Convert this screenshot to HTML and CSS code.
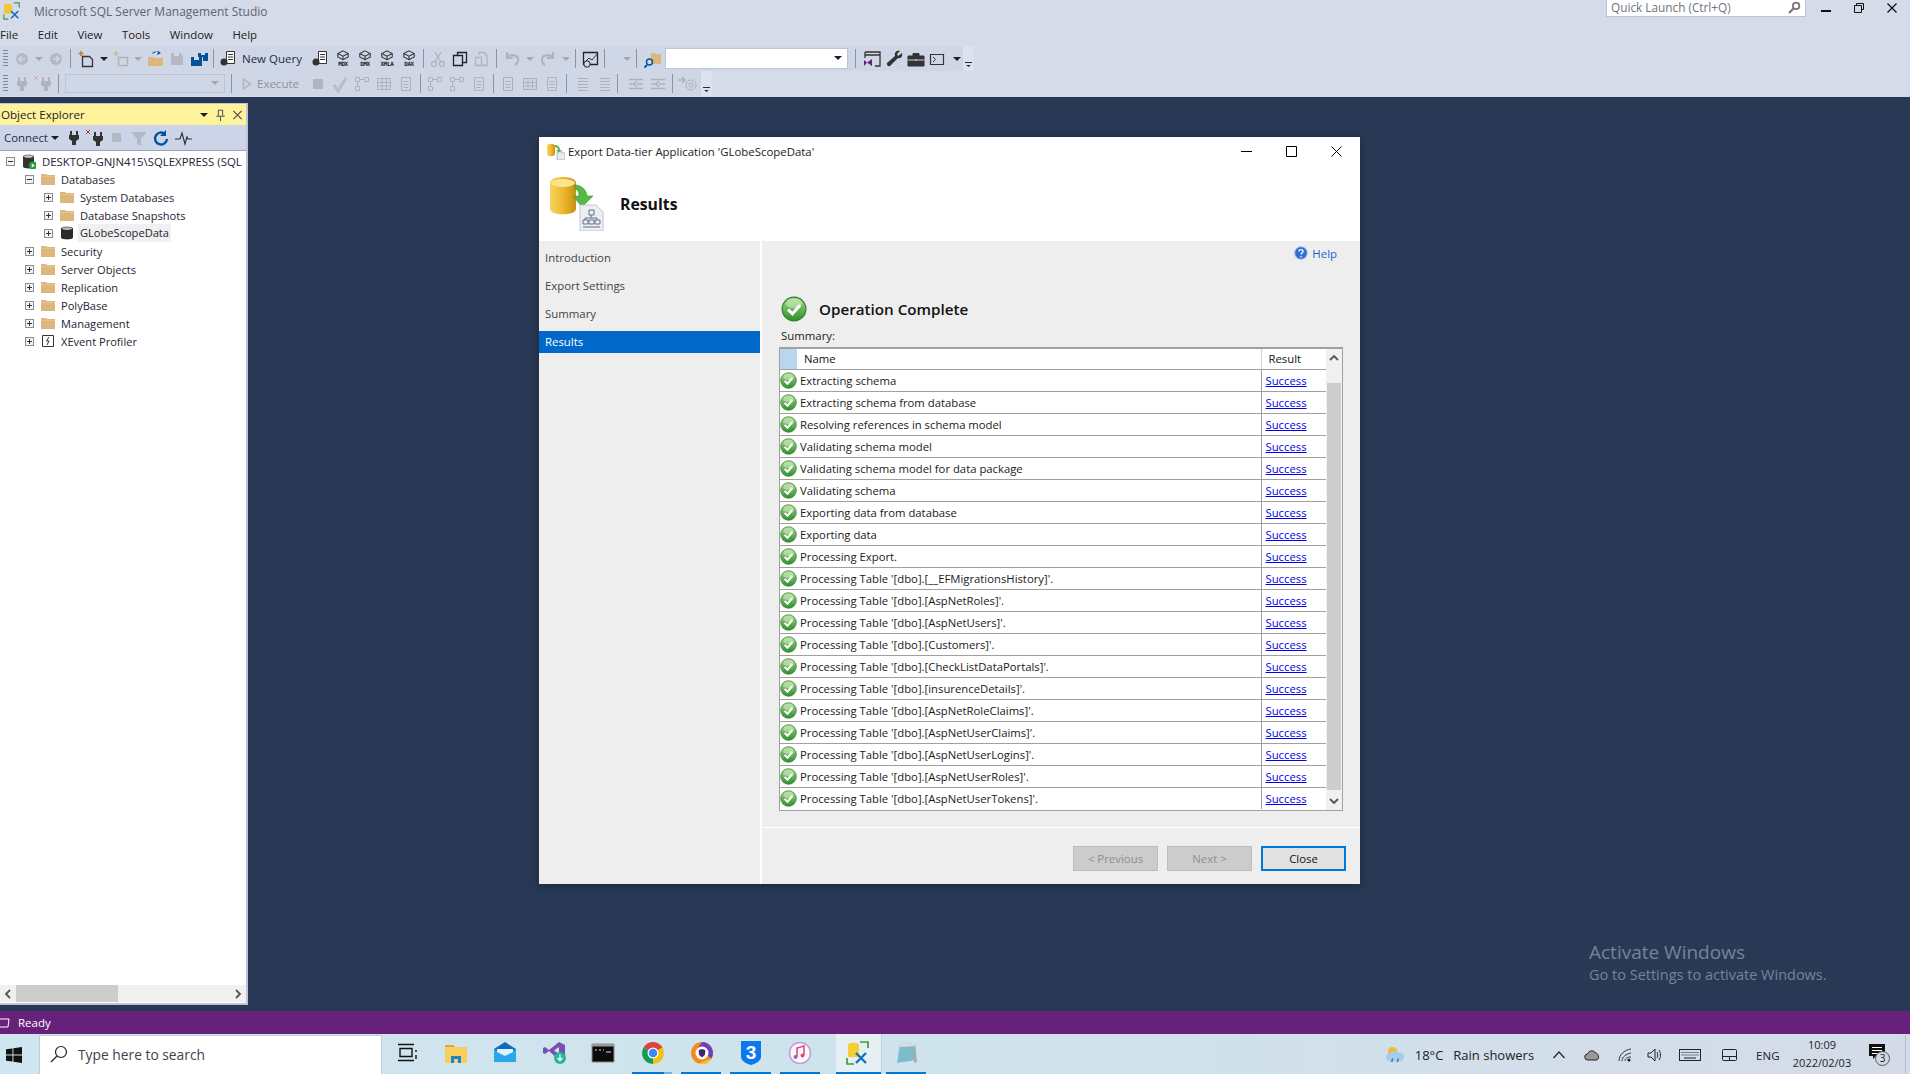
FILE: index.html
```html
<!DOCTYPE html>
<html lang="en">
<head>
    <meta charset="UTF-8"/>
    <title>Microsoft SQL Server Management Studio</title>
    <link rel="stylesheet" href="styles.css">
</head>
<body>

<!-- shared icons -->
<svg class="defs" aria-hidden="true">
    <defs>
        <linearGradient id="okFill" x1="0" y1="0" x2="0" y2="1">
            <stop offset="0" stop-color="#a5d88c"/>
            <stop offset="1" stop-color="#2f8f2c"/>
        </linearGradient>
        <linearGradient id="goldFill" x1="0" y1="0" x2="1" y2="0">
            <stop offset="0" stop-color="#f8d560"/>
            <stop offset="0.55" stop-color="#eab52c"/>
            <stop offset="1" stop-color="#c98f12"/>
        </linearGradient>
    </defs>
    <symbol id="ok" viewBox="0 0 24 24">
        <circle cx="12" cy="12" r="11" fill="url(#okFill)" stroke="#2d7d2a"/>
        <ellipse cx="12" cy="7" rx="7.500" ry="4.500" fill="#d5efc6" opacity=".55"/>
        <path d="M6.5 12.5l4 4 7-8" fill="none" stroke="#fff" stroke-width="2.8"/>
    </symbol>
    <symbol id="folder" viewBox="0 0 16 16">
        <path d="M1 3h5l1 1h8v10H1z" fill="#dcb67a"/>
        <path d="M1 5h14v1H1z" fill="#e6c58f"/>
    </symbol>
    <symbol id="db" viewBox="0 0 16 16">
        <path d="M2 3.5C2 1 14 1 14 3.5v9C14 15 2 15 2 12.5z" fill="#2b2b2b"/>
        <ellipse cx="8" cy="3.6" rx="5" ry="1.3" fill="#bbb"/>
    </symbol>
    <symbol id="plus" viewBox="0 0 9 9">
        <rect x=".5" y=".5" width="8" height="8" fill="#f4f4f4" stroke="#8c8c8c"/>
        <path d="M2 4.5h5M4.5 2v5" stroke="#333"/>
    </symbol>
    <symbol id="minus" viewBox="0 0 9 9">
        <rect x=".5" y=".5" width="8" height="8" fill="#f4f4f4" stroke="#8c8c8c"/>
        <path d="M2 4.5h5" stroke="#333"/>
    </symbol>
    <symbol id="cube" viewBox="0 0 16 16">
        <path d="M8 1l6 3v4l-6 3-6-3V4zM2 4l6 3 6-3M8 7v4" fill="none" stroke="#333" stroke-width="1.2"/>
    </symbol>
    <symbol id="boxes" viewBox="0 0 16 16">
        <path d="M1.500 1.500h4v4h-4zM10.500 1.500h4v4h-4zM5.500 3.500h5M3.500 5.500v5M1.500 10.500h4v4h-4z" fill="none" stroke="currentColor"/>
    </symbol>
    <symbol id="sheet" viewBox="0 0 16 16">
        <path d="M3.500 1.500h9v13h-9zM5.500 5.500h5M5.500 8.500h5M5.500 11.500h5" fill="none" stroke="currentColor"/>
    </symbol>
    <symbol id="table" viewBox="0 0 16 16">
        <path d="M1.500 2.500h13v11h-13zM1.500 6.500h13M1.500 10h13M6 2.500v11M10.500 2.500v11" fill="none" stroke="currentColor"/>
    </symbol>
    <symbol id="plug" viewBox="0 0 16 16">
        <path d="M4 1h2v4h4V1h2v4h1v4l-3 2v4H6v-4L3 9V5h1z" fill="currentColor"/>
    </symbol>
    <symbol id="indent" viewBox="0 0 16 16">
        <path d="M5 2.500h10M5 5.500h10M5 8.500h10M5 11.500h10M5 14.500h10" stroke="currentColor"/>
    </symbol>
    <symbol id="shift" viewBox="0 0 16 16">
        <path d="M1 3.500h14M1 12.500h14M1 8h5M9 8h6M9 5l-3 3 3 3" fill="none" stroke="currentColor" stroke-width="1.300"/>
    </symbol>
    <symbol id="chromeLogo" viewBox="0 0 24 24">
        <path d="M12 12L2.500 6.500A11 11 0 0 1 21.500 6.500z" fill="#db4437"/>
        <path d="M12 12L21.500 6.500A11 11 0 0 1 12 23z" fill="#f4c20d"/>
        <path d="M12 12L12 23A11 11 0 0 1 2.500 6.500z" fill="#0f9d58"/>
        <circle cx="12" cy="12" r="5.500" fill="#fff"/>
        <circle cx="12" cy="12" r="4.300" fill="#4285f4"/>
    </symbol>
</svg>

<header class="titlebar">
    <svg class="app-logo" viewBox="0 0 20 20">
        <path d="M1 4c0-3 9-3 9 0v9H1z" fill="#f2c73a"/>
        <path d="M12 1h6v5M1 14v5h5M18 13v0" fill="none" stroke="#3f9c3a" stroke-width="1.300"/>
        <path d="M9 10l8 8M17 10l-8 8" stroke="#0e70c0" stroke-width="1.800"/>
    </svg>
    <span class="app-title">Microsoft SQL Server Management Studio</span>
    <div class="quick-launch">
        <span>Quick Launch (Ctrl+Q)</span>
        <svg class="ql-icon" viewBox="0 0 12 12"><circle cx="7.500" cy="4.500" r="3" fill="none" stroke="#777" stroke-width="1.600"/><path d="M5 7l-4 4" stroke="#777" stroke-width="2"/></svg>
    </div>
    <div class="win-btns">
        <svg viewBox="0 0 10 10"><path d="M0 8h10" stroke="#111" stroke-width="2"/></svg>
        <svg viewBox="0 0 10 10"><path d="M2.500 2.500V.5h7v6h-2M.5 2.500h7v7h-7z" fill="none" stroke="#111"/></svg>
        <svg viewBox="0 0 10 10"><path d="M.5.500l9 9M9.500.5l-9 9" stroke="#111" stroke-width="1.300"/></svg>
    </div>
</header>

<nav class="menubar">
    <span>File</span><span>Edit</span><span>View</span><span>Tools</span><span>Window</span><span>Help</span>
</nav>

<div class="toolrow">
    <div class="toolbar first">
        <i class="grip"></i>
        <svg class="ti off"><circle cx="11" cy="11" r="6" fill="#b4b8c2"/><path d="M14 11H8m3-3l-3 3 3 3" fill="none" stroke="#d0d6e4" stroke-width="1.500"/></svg>
        <b class="dd off"></b>
        <svg class="ti off"><circle cx="11" cy="11" r="6" fill="#b4b8c2"/><path d="M8 11h6m-3-3l3 3-3 3" fill="none" stroke="#d0d6e4" stroke-width="1.500"/></svg>
        <i class="sep"></i>
        <svg class="ti sp2"><path d="M6.500 8.500h7l3 3v7h-10z" fill="none" stroke="#333" stroke-width="1.300"/><path d="M5 3v5M2.500 5.500h5" stroke="#c27d1a" stroke-width="1.500"/></svg>
        <b class="dd"></b>
        <svg class="ti off"><path d="M8.500 9.500h9v8h-9z" fill="none" stroke="#b0b4bc" stroke-width="1.500"/><path d="M6 3v5M3.500 5.500h5" stroke="#d3b98e" stroke-width="1.500"/></svg>
        <b class="dd off"></b>
        <svg class="ti"><path d="M4 9h5l1 1h9v8H4z" fill="#dcb67a"/><path d="M8 6c1-3 4-3 6-2l-1 3 4-2-3-2" fill="#00539c"/></svg>
        <svg class="ti off"><path d="M5 5h9l3 3v9H5z" fill="#b4b8c2"/><path d="M8 5h5v3H8z" fill="#d0d6e4"/></svg>
        <svg class="ti"><path d="M3 9h11v9H3z" fill="#00539c"/><path d="M10 5h10v8h-5V9h-5z" fill="#00539c"/><path d="M6 9h5v3H6zM13 5h4v2h-4z" fill="#d0d6e4"/></svg>
        <i class="sep"></i>
        <div class="tb-btn">
            <svg class="ti narrow"><path d="M8.500 3.500h8v12h-8z" fill="#fff" stroke="#333"/><path d="M10 6.500h5M10 9h5M10 11.500h5" stroke="#333"/><ellipse cx="6" cy="14" rx="3.500" ry="3.500" fill="#333"/></svg>
            <span>New Query</span>
        </div>
        <svg class="ti sp8"><path d="M8.500 3.500h8v12h-8z" fill="#fff" stroke="#333"/><path d="M10 6.500h5M10 9h5M10 11.500h5" stroke="#333"/><ellipse cx="6" cy="14" rx="3.500" ry="3.500" fill="#333"/></svg>
        <div class="cube-ic"><svg><use href="#cube"/></svg><em>MDX</em></div>
        <div class="cube-ic"><svg><use href="#cube"/></svg><em>DMX</em></div>
        <div class="cube-ic"><svg><use href="#cube"/></svg><em>XMLA</em></div>
        <div class="cube-ic"><svg><use href="#cube"/></svg><em>DAX</em></div>
        <i class="sep"></i>
        <svg class="ti off"><circle cx="7" cy="16" r="2.500" fill="none" stroke="#b0b4bc" stroke-width="1.300"/><circle cx="15" cy="16" r="2.500" fill="none" stroke="#b0b4bc" stroke-width="1.300"/><path d="M8 14l6-10M14 14L8 4" stroke="#b0b4bc" stroke-width="1.300"/></svg>
        <svg class="ti"><path d="M4.500 7.500h9v10h-9zM8.500 7.500v-3h9v10h-4" fill="none" stroke="#222" stroke-width="1.300"/></svg>
        <svg class="ti off"><path d="M4.500 9.500h6v8h-6zM8 7V4.500h5l3 3v10h-5" fill="none" stroke="#b0b4bc" stroke-width="1.300"/></svg>
        <i class="sep"></i>
        <svg class="ti off sp2"><path d="M5 4v6h6M5 10c4-5 12-3 11 3-.4 2-1.500 3-3 4" fill="none" stroke="#b0b4bc" stroke-width="2.200"/></svg>
        <b class="dd off"></b>
        <svg class="ti off"><path d="M17 4v6h-6M17 10c-4-5-12-3-11 3 .4 2 1.500 3 3 4" fill="none" stroke="#b0b4bc" stroke-width="2.200"/></svg>
        <b class="dd off sp2"></b>
        <i class="sep"></i>
        <svg class="ti"><path d="M4.500 4.500h14v12h-14z" fill="none" stroke="#222" stroke-width="1.300"/><path d="M6 14l4-4 3 2 5-6" fill="none" stroke="#333"/><circle cx="8" cy="16" r="3.200" fill="#d0d6e4" stroke="#222"/></svg>
        <i class="sep"></i>
        <span class="blank"></span>
        <b class="dd off"></b>
        <i class="sep"></i>
        <svg class="ti sp2"><path d="M9 5h4l1 1h5v10H9z" fill="#dcb67a"/><circle cx="7.500" cy="14" r="3" fill="none" stroke="#00539c" stroke-width="1.400"/><path d="M5 17l-2.500 2.500" stroke="#00539c" stroke-width="1.800"/></svg>
        <div class="db-combo"><b class="dd dark"></b></div>
        <i class="sep"></i>
        <svg class="ti sp2"><path d="M4 4h15v14h-5M4 4v6M4 7h15" fill="none" stroke="#333" stroke-width="1.300"/><path d="M3 12l3 2.500L3 18zM6 14.500L11 11v7z" fill="#68217a"/></svg>
        <svg class="ti"><path d="M19 5l-4 3-1-2 3-3c-3-1-6 1-5 5L4 15a2.300 2.300 0 0 0 3 3l8-8c3 1 5-2 4-5z" fill="#333"/></svg>
        <svg class="ti"><path d="M3 8h16v10H3zM8 8V5.500h6V8" fill="#333" stroke="#333"/><path d="M3 12h16M11 11v2" stroke="#d0d6e4"/></svg>
        <svg class="ti wide"><path d="M3.500 6.500h13v10h-13z" fill="none" stroke="#333" stroke-width="1.200"/><path d="M6 9l2.500 2.500L6 14" fill="none" stroke="#333"/></svg>
        <b class="dd dark"></b>
    </div>
    <div class="overflow"><b></b></div>
</div>

<div class="toolrow">
    <div class="toolbar second">
        <i class="grip"></i>
        <svg class="ti off"><use href="#plug" x="3" y="3" width="16" height="16" color="#b0b4bc"/></svg>
        <svg class="ti off"><use href="#plug" x="5" y="3" width="16" height="16" color="#b0b4bc"/><path d="M1 3l4 4M5 3L1 7" stroke="#d3a9a0"/></svg>
        <i class="sep"></i>
        <div class="conn-combo"><b class="dd off"></b></div>
        <i class="sep"></i>
        <svg class="play" viewBox="0 0 10 14"><path d="M1.500 2l7 5-7 5z" fill="none" stroke="#b0b4bc" stroke-width="1.500"/></svg>
        <span class="exec">Execute</span>
        <svg class="ti off sp8"><rect x="6" y="6" width="10" height="10" fill="#b0b4bc"/></svg>
        <svg class="ti off"><path d="M5 12l4 6 8-13" fill="none" stroke="#b8bcc6" stroke-width="3"/></svg>
        <svg class="ti off tone"><use href="#boxes" x="3" y="3" width="16" height="16"/></svg>
        <svg class="ti off tone"><use href="#table" x="3" y="3" width="16" height="16"/></svg>
        <svg class="ti off tone"><use href="#sheet" x="3" y="3" width="16" height="16"/></svg>
        <i class="sep"></i>
        <svg class="ti off tone"><use href="#boxes" x="3" y="3" width="16" height="16"/></svg>
        <svg class="ti off tone"><use href="#boxes" x="3" y="3" width="16" height="16"/></svg>
        <svg class="ti off tone"><use href="#sheet" x="3" y="3" width="16" height="16"/></svg>
        <i class="sep"></i>
        <svg class="ti off tone"><use href="#sheet" x="3" y="3" width="16" height="16"/></svg>
        <svg class="ti off tone"><use href="#table" x="3" y="3" width="16" height="16"/></svg>
        <svg class="ti off tone"><use href="#sheet" x="3" y="3" width="16" height="16"/></svg>
        <i class="sep"></i>
        <svg class="ti off tone"><use href="#indent" x="3" y="3" width="16" height="16"/></svg>
        <svg class="ti off tone"><use href="#indent" x="3" y="3" width="16" height="16"/></svg>
        <i class="sep"></i>
        <svg class="ti off tone sp4"><use href="#shift" x="3" y="3" width="16" height="16"/></svg>
        <svg class="ti off tone"><use href="#shift" x="3" y="3" width="16" height="16"/></svg>
        <i class="sep"></i>
        <svg class="ti off tone wide"><path d="M2 7h6m-2-3l3 3-3 3" fill="none" stroke="currentColor" stroke-width="1.500"/><circle cx="15" cy="12" r="5" fill="none" stroke="currentColor"/><circle cx="15" cy="12" r="2" fill="none" stroke="currentColor"/></svg>
    </div>
    <div class="overflow"><b></b></div>
</div>

<main class="workspace">
    <aside class="explorer">
        <div class="oe-title">
            <span>Object Explorer</span>
            <b class="dd dark"></b>
            <svg viewBox="0 0 12 14"><path d="M3.500 1.500h5v7h-5zM1 8.500h10M6 9v5" fill="none" stroke="#555" stroke-width="1.200"/></svg>
            <svg viewBox="0 0 12 12"><path d="M1.500 1.500l9 9M10.500 1.500l-9 9" stroke="#555" stroke-width="1.400"/></svg>
        </div>
        <div class="oe-tools">
            <span class="connect">Connect</span>
            <b class="dd dark"></b>
            <svg class="oi first-oi"><use href="#plug" x="2" y="1" width="16" height="16" color="#333"/></svg>
            <svg class="oi"><use href="#plug" x="4" y="2" width="16" height="16" color="#333"/><path d="M0 1l4 4M4 1L0 5" stroke="#c1392b"/></svg>
            <svg class="oi"><rect x="4" y="4" width="9" height="9" fill="#b4b8c2"/></svg>
            <svg class="oi"><path d="M1 3h16l-6 7v7l-4-2v-5z" fill="#b4b8c2"/></svg>
            <svg class="oi"><path d="M15 10a6 6 0 1 1-2-5" fill="none" stroke="#00539c" stroke-width="2.400"/><path d="M14 1v6H8z" fill="#00539c"/></svg>
            <svg class="oi"><path d="M1 10h5l2-6 3 11 2-7 1 2h4" fill="none" stroke="#333" stroke-width="1.200"/></svg>
        </div>
        <div class="tree">
            <div class="node lv0"><svg class="exp"><use href="#minus"/></svg>
                <svg class="ni"><path d="M3 3.500C3 1 14 1 14 3.500v10C14 16 3 16 3 13.500z" fill="#333"/><ellipse cx="8.500" cy="3.500" rx="4.500" ry="1.300" fill="#ccc"/><circle cx="13" cy="12.500" r="4" fill="#22a33a"/><path d="M11.800 10.500l3 2-3 2z" fill="#fff"/></svg>
                <span>DESKTOP-GNJN415\SQLEXPRESS (SQL</span></div>
            <div class="node lv1"><svg class="exp"><use href="#minus"/></svg><svg class="ni"><use href="#folder"/></svg><span>Databases</span></div>
            <div class="node lv2"><svg class="exp"><use href="#plus"/></svg><svg class="ni"><use href="#folder"/></svg><span>System Databases</span></div>
            <div class="node lv2"><svg class="exp"><use href="#plus"/></svg><svg class="ni"><use href="#folder"/></svg><span>Database Snapshots</span></div>
            <div class="node lv2"><svg class="exp"><use href="#plus"/></svg><svg class="ni"><use href="#db"/></svg><span class="picked">GLobeScopeData</span></div>
            <div class="node lv1"><svg class="exp"><use href="#plus"/></svg><svg class="ni"><use href="#folder"/></svg><span>Security</span></div>
            <div class="node lv1"><svg class="exp"><use href="#plus"/></svg><svg class="ni"><use href="#folder"/></svg><span>Server Objects</span></div>
            <div class="node lv1"><svg class="exp"><use href="#plus"/></svg><svg class="ni"><use href="#folder"/></svg><span>Replication</span></div>
            <div class="node lv1"><svg class="exp"><use href="#plus"/></svg><svg class="ni"><use href="#folder"/></svg><span>PolyBase</span></div>
            <div class="node lv1"><svg class="exp"><use href="#plus"/></svg><svg class="ni"><use href="#folder"/></svg><span>Management</span></div>
            <div class="node lv1"><svg class="exp"><use href="#plus"/></svg><svg class="ni"><path d="M2.500 2.500h11v11h-11z" fill="#fff" stroke="#333"/><path d="M9 4L6.500 8H9l-2 4" fill="none" stroke="#333"/></svg><span>XEvent Profiler</span></div>
        </div>
        <div class="hscroll">
            <svg viewBox="0 0 8 10"><path d="M6 1L2 5l4 4" fill="none" stroke="#555" stroke-width="1.800"/></svg>
            <div class="hthumb"></div>
            <svg viewBox="0 0 8 10"><path d="M2 1l4 4-4 4" fill="none" stroke="#555" stroke-width="1.800"/></svg>
        </div>
    </aside>

    <section class="dialog">
        <div class="dlg-title">
            <svg class="dlg-icon" viewBox="0 0 18 17">
                <path d="M0 3c0-3 8-3 8 0v8c0 3-8 3-8 0z" fill="url(#goldFill)"/>
                <path d="M8 2c3 0 5 2 5 5h2l-3 3-3-3h2c0-1-1-3-3-3z" fill="#5cb54a"/>
                <path d="M10 9h6l2 2v6h-8z" fill="#e6e9ee" stroke="#8a93a5" stroke-width=".6"/>
            </svg>
            <span>Export Data-tier Application 'GLobeScopeData'</span>
            <div class="dlg-btns">
                <svg viewBox="0 0 11 11"><path d="M0 5.500h11" stroke="#000"/></svg>
                <svg viewBox="0 0 11 11"><path d="M.5.500h10v10H.5z" fill="none" stroke="#000"/></svg>
                <svg viewBox="0 0 11 11"><path d="M.5.500l10 10M10.500.5l-10 10" stroke="#000"/></svg>
            </div>
        </div>
        <div class="dlg-head">
            <svg class="dlg-big" viewBox="0 0 54 54">
                <path d="M0 6C0-2 26-2 26 6v26c0 7-26 7-26 0z" fill="url(#goldFill)"/>
                <ellipse cx="13" cy="6" rx="12" ry="4" fill="#fbe48a"/>
                <path d="M25 8c8 0 12 7 12 11h6L32 30 23 19h6c0-4-1-6-4-7z" fill="#57b846" stroke="#3c9a33" stroke-width=".6"/>
                <path d="M30 28h16l7 7v19H30z" fill="#eceef2" stroke="#c0c5cf"/>
                <path d="M39 33h5v5h-5zM33 43h5v4h-5zM39 43h5v4h-5zM45 43h5v4h-5zM41 38v3M35 43v-2h12v2M33 50h17" fill="none" stroke="#5c7391"/>
            </svg>
            <h2>Results</h2>
        </div>
        <div class="dlg-body">
            <ul class="dlg-nav">
                <li>Introduction</li>
                <li>Export Settings</li>
                <li>Summary</li>
                <li class="active">Results</li>
            </ul>
            <div class="dlg-main">
                <div class="help">
                    <svg viewBox="0 0 14 14"><circle cx="7" cy="7" r="6.200" fill="#2f6fd0" stroke="#8fb3e6"/><path d="M5 5.500C5 3 9 3 9 5.500 9 7 7 7 7 8.500M7 10v1.300" fill="none" stroke="#fff" stroke-width="1.400"/></svg>
                    <a>Help</a>
                </div>
                <div class="op-row">
                    <svg><use href="#ok"/></svg>
                    <h3>Operation Complete</h3>
                </div>
                <div class="summary">Summary:</div>
                <div class="grid-wrap">
                    <table class="grid">
                        <colgroup><col class="c-icon"><col class="c-name"><col class="c-res"></colgroup>
                        <thead>
                            <tr><th class="corner"></th><th class="h-name">Name</th><th class="h-res">Result</th></tr>
                        </thead>
                        <tbody>
                            <tr><td><svg><use href="#ok"/></svg></td><td>Extracting schema</td><td><a>Success</a></td></tr>
                            <tr><td><svg><use href="#ok"/></svg></td><td>Extracting schema from database</td><td><a>Success</a></td></tr>
                            <tr><td><svg><use href="#ok"/></svg></td><td>Resolving references in schema model</td><td><a>Success</a></td></tr>
                            <tr><td><svg><use href="#ok"/></svg></td><td>Validating schema model</td><td><a>Success</a></td></tr>
                            <tr><td><svg><use href="#ok"/></svg></td><td>Validating schema model for data package</td><td><a>Success</a></td></tr>
                            <tr><td><svg><use href="#ok"/></svg></td><td>Validating schema</td><td><a>Success</a></td></tr>
                            <tr><td><svg><use href="#ok"/></svg></td><td>Exporting data from database</td><td><a>Success</a></td></tr>
                            <tr><td><svg><use href="#ok"/></svg></td><td>Exporting data</td><td><a>Success</a></td></tr>
                            <tr><td><svg><use href="#ok"/></svg></td><td>Processing Export.</td><td><a>Success</a></td></tr>
                            <tr><td><svg><use href="#ok"/></svg></td><td>Processing Table '[dbo].[__EFMigrationsHistory]'.</td><td><a>Success</a></td></tr>
                            <tr><td><svg><use href="#ok"/></svg></td><td>Processing Table '[dbo].[AspNetRoles]'.</td><td><a>Success</a></td></tr>
                            <tr><td><svg><use href="#ok"/></svg></td><td>Processing Table '[dbo].[AspNetUsers]'.</td><td><a>Success</a></td></tr>
                            <tr><td><svg><use href="#ok"/></svg></td><td>Processing Table '[dbo].[Customers]'.</td><td><a>Success</a></td></tr>
                            <tr><td><svg><use href="#ok"/></svg></td><td>Processing Table '[dbo].[CheckListDataPortals]'.</td><td><a>Success</a></td></tr>
                            <tr><td><svg><use href="#ok"/></svg></td><td>Processing Table '[dbo].[insurenceDetails]'.</td><td><a>Success</a></td></tr>
                            <tr><td><svg><use href="#ok"/></svg></td><td>Processing Table '[dbo].[AspNetRoleClaims]'.</td><td><a>Success</a></td></tr>
                            <tr><td><svg><use href="#ok"/></svg></td><td>Processing Table '[dbo].[AspNetUserClaims]'.</td><td><a>Success</a></td></tr>
                            <tr><td><svg><use href="#ok"/></svg></td><td>Processing Table '[dbo].[AspNetUserLogins]'.</td><td><a>Success</a></td></tr>
                            <tr><td><svg><use href="#ok"/></svg></td><td>Processing Table '[dbo].[AspNetUserRoles]'.</td><td><a>Success</a></td></tr>
                            <tr><td><svg><use href="#ok"/></svg></td><td>Processing Table '[dbo].[AspNetUserTokens]'.</td><td><a>Success</a></td></tr>
                        </tbody>
                    </table>
                    <div class="vscroll">
                        <svg viewBox="0 0 10 8"><path d="M1 6l4-4 4 4" fill="none" stroke="#555" stroke-width="1.800"/></svg>
                        <div class="vthumb"></div>
                        <svg viewBox="0 0 10 8"><path d="M1 2l4 4 4-4" fill="none" stroke="#555" stroke-width="1.800"/></svg>
                    </div>
                </div>
                <div class="dlg-foot">
                    <button class="btn" disabled>&lt; Previous</button>
                    <button class="btn" disabled>Next &gt;</button>
                    <button class="btn main-btn">Close</button>
                </div>
            </div>
        </div>
    </section>

    <div class="activate">
        <div class="act-big">Activate Windows</div>
        <div class="act-small">Go to Settings to activate Windows.</div>
    </div>
</main>

<div class="statusbar">
    <svg viewBox="0 0 10 10"><path d="M-2 1h11L8 9H-2" fill="none" stroke="#fff"/></svg>
    <span>Ready</span>
</div>

<footer class="taskbar">
    <svg class="start" viewBox="0 0 16 16"><path d="M0 2.300l6.500-.9v6.200H0zM7.400 1.300L16 0v7.600H7.400zM0 8.400h6.500v6.200L0 13.700zM7.400 8.400H16V16l-8.600-1.300z" fill="#111"/></svg>
    <div class="search">
        <svg viewBox="0 0 18 18"><circle cx="11" cy="7" r="5.500" fill="none" stroke="#222" stroke-width="1.200"/><path d="M7 11l-6 6" stroke="#222" stroke-width="1.200"/></svg>
        <span>Type here to search</span>
    </div>
    <div class="apps">
        <div class="app"><svg viewBox="0 0 24 24"><path d="M3 3.500h16M3 19.500h16M5 7.500h12v8H5zM21 9v2M21 14v4" fill="none" stroke="#111" stroke-width="1.400"/></svg></div>
        <div class="app"><svg viewBox="0 0 24 24"><path d="M1 4h8l2 2h12v16H1z" fill="#f6cf5f"/><path d="M1 4h8l2 2H1z" fill="#e2a92f"/><path d="M7 15h10v7h-3v-4h-4v4H7z" fill="#1a86d0"/></svg></div>
        <div class="app"><svg viewBox="0 0 24 24"><path d="M1 8l11-7 11 7v13H1z" fill="#0f6cbd"/><path d="M1 8l11 7 11-7v13H1z" fill="#28a8ea"/><path d="M4 8h16v3l-8 4-8-4z" fill="#dff1fb"/></svg></div>
        <div class="app"><svg viewBox="0 0 24 24"><path d="M17 1l6 3v12l-6 3L7 10l-4 3-2-1V7l2-1 4 3zM17 6l-5 3.500 5 3.500z" fill="#7a4fb5"/><circle cx="18" cy="17" r="6" fill="#1fb89a"/><path d="M18 13.500v6m-2.500-2.500l2.500 2.500 2.500-2.500" fill="none" stroke="#fff" stroke-width="1.300"/></svg></div>
        <div class="app"><svg viewBox="0 0 24 24"><path d="M1 3h22v18H1z" fill="#0b0b0b" stroke="#8c8c8c"/><path d="M1 3h22v2.500H1z" fill="#9a9a9a"/><path d="M4 9h2M8 9h2M12 9h1M15 11h5" stroke="#ddd"/></svg></div>
        <div class="app on stacked"><svg><use href="#chromeLogo"/></svg></div>
        <div class="app on"><svg viewBox="0 0 24 24"><circle cx="12" cy="12" r="11" fill="#f28a1e"/><path d="M12 1a11 11 0 0 1 9.500 16.500L8 7z" fill="#6a3fc4"/><path d="M21.500 17.500A11 11 0 0 1 8 22.500z" fill="#f6c42f"/><circle cx="12" cy="12" r="6.500" fill="#fff"/><path d="M8.800 9l3.200-1 3.200 1v3c0 2-1.500 3.500-3.200 4.200C10.300 15.500 8.800 14 8.800 12z" fill="#3a2a66"/></svg></div>
        <div class="app on"><svg viewBox="0 0 24 24"><path d="M2 0h20v16c0 4-6 7-10 8-4-1-10-4-10-8z" fill="#0b78ec"/><text x="12" y="18" class="three">3</text></svg></div>
        <div class="app on"><svg viewBox="0 0 24 24"><circle cx="12" cy="12" r="10.500" fill="#fafafa" stroke="#c39bd6" stroke-width="1.500"/><path d="M9 16V7l7-2v9" fill="none" stroke="#e04a7d" stroke-width="1.600"/><circle cx="7.500" cy="16" r="2" fill="#a85ad0"/><circle cx="14.500" cy="14.500" r="2" fill="#e04a7d"/></svg></div>
        <div class="app on current"><svg viewBox="0 0 24 24"><path d="M2 4c0-3 11-3 11 0v12H2z" fill="#f5cf2f"/><path d="M14 1h8v6M1 17v6h7" fill="none" stroke="#3f9c3a" stroke-width="1.700"/><path d="M10 12l10 10M20 12L10 22" stroke="#0e70c0" stroke-width="2.300"/></svg></div>
        <div class="app on"><svg viewBox="0 0 24 24"><path d="M6 3l15-1 1 17-19 3z" fill="#7fbccb"/><path d="M6 3l15-1v3L6 6z" fill="#ddd"/><path d="M21 2l2 19-3 1z" fill="#b6a894"/></svg></div>
    </div>
    <div class="tray">
        <svg class="weather" viewBox="0 0 22 20"><circle cx="8" cy="6" r="5" fill="#f5b83d"/><path d="M5 16a4 4 0 0 1 0-8c1-3 7-4 9-1 4-1 7 2 6 5 0 2-2 4-4 4z" fill="#a5cdeb"/><path d="M8 13l-1 4M14 13l-1 4" stroke="#2f80d0" stroke-width="1.600"/></svg>
        <span class="temp">18°C</span>
        <span class="cond">Rain showers</span>
        <svg class="t-chev" viewBox="0 0 12 8"><path d="M.5 7l5.500-6 5.500 6" fill="none" stroke="#222" stroke-width="1.200"/></svg>
        <svg class="t-cloud" viewBox="0 0 16 12"><path d="M4 11a3 3 0 0 1-.5-6C5 1 10 1 11.500 4 15 4 16 11 12 11z" fill="#999" stroke="#222"/></svg>
        <svg class="t-wifi" viewBox="0 0 14 14"><path d="M1 13C1 7 6 2 13 1M4 13c0-4 4-7 9-8M7 13c0-2 2-4 6-4" fill="none" stroke="#333"/><circle cx="11" cy="12" r="1.600" fill="#222"/></svg>
        <svg class="t-vol" viewBox="0 0 16 14"><path d="M1 5h3l4-4v12L4 9H1z" fill="none" stroke="#222"/><path d="M10 4c1 2 1 4 0 6M12 2c2 3 2 7 0 10" fill="none" stroke="#222"/></svg>
        <svg class="t-kbd" viewBox="0 0 22 12"><rect x=".5" y=".5" width="21" height="11" fill="none" stroke="#222"/><path d="M2.500 3.500h17M2.500 6h17" stroke="#222" stroke-dasharray="1 1"/><path d="M5 9h12" stroke="#222"/></svg>
        <svg class="t-pad" viewBox="0 0 15 12"><rect x=".5" y=".5" width="14" height="11" rx="1" fill="none" stroke="#222"/><path d="M.5 7.500h14M7.500 7.500v4" stroke="#222"/></svg>
        <span class="lang">ENG</span>
        <div class="clock"><span>10:09</span><span>2022/02/03</span></div>
        <div class="notif">
            <svg viewBox="0 0 16 16"><path d="M0 0h16v12H7l-3 3v-3H0z" fill="#111"/><path d="M3 3.500h10M3 6.500h10M3 9.500h6" stroke="#fff"/></svg>
            <span class="badge">3</span>
        </div>
        <i class="peek"></i>
    </div>
</footer>

</body>
</html>
```

FILE: styles.css
```css
* {
  box-sizing: border-box;
}
html, body {
  margin: 0;
  height: 100%;
  overflow: hidden;
}
body {
  font-family: "Open Sans", "Noto Sans", sans-serif;
  font-size: 11.4px;
  color: #111;
  background: #d6dbe9;
  display: flex;
  flex-direction: column;
}
svg {
  display: block;
  flex: none;
}
.defs {
  position: absolute;
  width: 0;
  height: 0;
}

/* title bar + menu */
.titlebar {
  height: 24px;
  display: flex;
  align-items: flex-start;
  padding-left: 3px;
}
.app-logo {
  width: 18px;
  height: 18px;
  margin-top: 2px;
}
.app-title {
  margin-left: 13px;
  margin-top: 3px;
  color: #5d6470;
  font-size: 12px;
}
.quick-launch {
  margin-left: auto;
  width: 200px;
  height: 17px;
  background: #fff;
  border: 1px solid #bcc4d6;
  border-top: 0;
  padding: 0 4px 2px 4px;
  display: flex;
  align-items: center;
  justify-content: space-between;
  color: #6d7480;
  font-size: 11.8px;
}
.ql-icon {
  width: 13px;
  height: 13px;
}
.win-btns {
  display: flex;
  width: 104px;
  padding: 3px 13px 0 15px;
  justify-content: space-between;
}
.win-btns svg {
  width: 10px;
  height: 10px;
}
.menubar {
  height: 22px;
  display: flex;
  align-items: center;
  gap: 19.6px;
  color: #222;
  padding-bottom: 1px;
}

/* toolbars */
.toolrow {
  height: 25px;
  display: flex;
}
.toolrow + .toolrow {
  height: 26px;
  padding-bottom: 1px;
}
.toolbar {
  background: #cfd6e6;
  display: flex;
  align-items: center;
  padding-left: 3px;
  color: #b0b4bc;
}
.toolbar.first {
  width: 963px;
}
.toolbar.second {
  width: 701px;
}
.overflow {
  width: 11px;
  background: #dde2ee;
  position: relative;
}
.overflow b {
  position: absolute;
  left: 2px;
  bottom: 4px;
  width: 7px;
  height: 5px;
  border-top: 1px solid #1e2b47;
  background: linear-gradient(#1e2b47, #1e2b47) center 2px / 7px 3px no-repeat;
  clip-path: polygon(0 0, 100% 0, 100% 40%, 50% 100%, 0 40%);
}
.grip {
  width: 5px;
  height: 19px;
  margin-right: 3px;
  background: radial-gradient(#7d8699 40%, transparent 45%) 0 0 / 2px 3px;
}
.ti {
  width: 22px;
  height: 22px;
}
.ti.narrow {
  width: 24px;
  margin-left: 1px;
}
.ti.wide {
  width: 24px;
}
.tone {
  color: #aeb2bb;
}
.sp2 {
  margin-left: 2px;
}
.sp4 {
  margin-left: 4px;
}
.sp8 {
  margin-left: 8px;
}
.dd {
  width: 12px;
  height: 14px;
  position: relative;
  flex: none;
}
.dd::after {
  content: "";
  position: absolute;
  left: 2px;
  top: 5px;
  border: 4px solid transparent;
  border-top-color: #1e1e1e;
  border-bottom: 0;
}
.dd.off::after {
  border-top-color: #a4a8b2;
}
.sep {
  width: 1px;
  height: 19px;
  background: #8c93a5;
  margin: 0 3px;
  flex: none;
}
.tb-btn {
  display: flex;
  align-items: center;
  color: #1e2b47;
  font-size: 11.5px;
  width: 85px;
}
.cube-ic {
  width: 22px;
  height: 22px;
  position: relative;
}
.cube-ic svg {
  position: absolute;
  left: 4px;
  top: 2px;
  width: 14px;
  height: 14px;
}
.cube-ic em {
  position: absolute;
  left: 0;
  right: 0;
  top: 12px;
  text-align: center;
  font: bold 6px "DejaVu Sans Mono", monospace;
  letter-spacing: -.4px;
  color: #222;
}
.blank {
  width: 13px;
}
.db-combo {
  width: 183px;
  height: 21px;
  margin: 0 4px 0 1px;
  background: #fff;
  border: 1px solid #bcc6da;
  position: relative;
}
.db-combo .dd {
  position: absolute;
  right: 3px;
  top: 2px;
}
.conn-combo {
  width: 160px;
  height: 19px;
  border: 1px solid #bcc4d6;
  margin: 0 3px 0 3px;
  position: relative;
}
.conn-combo .dd {
  position: absolute;
  right: 3px;
  top: 1px;
}
.play {
  width: 10px;
  height: 14px;
  margin: 0 5px 0 7px;
}
.exec {
  color: #8e929c;
  font-size: 11.5px;
  width: 42px;
}

/* main area */
.workspace {
  flex: 1;
  background: #293955;
  position: relative;
  padding-top: 6px;
  display: flex;
  flex-direction: column;
  min-height: 0;
}
.explorer {
  width: 248px;
  height: 902px;
  background: #fff;
  border-right: 2px solid #bcc4d6;
  border-top: 1px solid #bcc4d6;
  border-bottom: 2px solid #bcc4d6;
  display: flex;
  flex-direction: column;
}
.oe-title {
  height: 21px;
  background: #fff29d;
  display: flex;
  align-items: center;
  padding: 0 3px 0 1px;
  font-size: 11.6px;
  color: #1c1c1c;
}
.oe-title span {
  flex: 1;
}
.oe-title .dd {
  margin-right: -1px;
}
.oe-title svg {
  width: 11px;
  height: 12px;
  margin-left: 6px;
}
.oe-tools {
  height: 26px;
  background: #ccd5e8;
  display: flex;
  align-items: center;
  padding-left: 4px;
  border-bottom: 1px solid #9aa3b8;
}
.connect {
  color: #1e2b47;
  width: 45px;
}
.oi {
  width: 18px;
  height: 18px;
  margin-left: 4px;
}
.first-oi {
  margin-left: 3px;
}
.tree {
  flex: 1;
  padding: 1px 0 0 0;
  overflow: hidden;
  font-size: 11.1px;
}
.node {
  height: 18px;
  display: flex;
  align-items: center;
  white-space: nowrap;
  color: #1e2533;
}
.exp {
  width: 9px;
  height: 9px;
}
.ni {
  width: 16px;
  height: 16px;
  margin: 0 5px 0 6px;
}
.lv0 {
  padding-left: 6px;
}
.lv1 {
  padding-left: 25px;
}
.lv2 {
  padding-left: 44px;
}
.lv0 .ni {
  margin: 0 6px 0 5px;
}
.lv0 span {
  font-size: 11.4px;
}
.picked {
  background: #f0f0f0;
  padding: 0 2px;
  margin-left: -2px;
  line-height: 18px;
}
.hscroll {
  height: 17px;
  background: #f0f0f0;
  display: flex;
  align-items: center;
  margin-bottom: 1px;
}
.hscroll svg {
  width: 8px;
  height: 10px;
  margin: 0 4px;
}
.hthumb {
  width: 102px;
  height: 100%;
  background: #cdcdcd;
  margin-right: auto;
}

/* dialog window */
.dialog {
  position: absolute;
  left: 539px;
  top: 40px;
  width: 821px;
  height: 747px;
  background: #fff;
  display: flex;
  flex-direction: column;
  box-shadow: 0 2px 10px rgba(0, 0, 0, 0.35);
}
.dlg-title {
  height: 28px;
  display: flex;
  align-items: center;
  padding-left: 8px;
  color: #222;
  font-size: 11.4px;
}
.dlg-icon {
  width: 18px;
  height: 17px;
  margin-right: 3px;
}
.dlg-btns {
  margin-left: auto;
  display: flex;
  gap: 34px;
  padding-right: 18px;
}
.dlg-btns svg {
  width: 11px;
  height: 11px;
}
.dlg-head {
  height: 76px;
  display: flex;
  align-items: center;
  padding-left: 11px;
}
.dlg-big {
  width: 54px;
  height: 54px;
  margin-top: 2px;
}
.dlg-head h2 {
  margin: 2px 0 0 16px;
  font-size: 15.8px;
  font-weight: 700;
  color: #111;
}
.dlg-body {
  flex: 1;
  display: flex;
  min-height: 0;
}
.dlg-nav {
  width: 221px;
  background: #eee;
  margin: 0;
  padding: 6px 0 0 0;
  list-style: none;
  color: #444;
}
.dlg-nav li {
  height: 22px;
  line-height: 21px;
  padding-left: 6px;
  margin-bottom: 6px;
}
.dlg-nav .active {
  background: #0068c9;
  color: #fff;
}
.dlg-main {
  flex: 1;
  margin-left: 2px;
  background: #eee;
  display: flex;
  flex-direction: column;
  padding-top: 3px;
}
.help {
  height: 18px;
  display: flex;
  align-items: center;
  justify-content: flex-end;
  gap: 4px;
  padding-right: 23px;
  color: #1f5fd0;
}
.help svg {
  width: 14px;
  height: 14px;
}
.op-row {
  height: 26px;
  margin-top: 34px;
  padding-left: 19px;
  display: flex;
  align-items: center;
}
.op-row svg {
  width: 26px;
  height: 26px;
}
.op-row h3 {
  margin: 0 0 0 12px;
  font-size: 15.2px;
  font-weight: 600;
  color: #111;
}
.summary {
  height: 18px;
  line-height: 19px;
  margin: 4px 0 0 19px;
  color: #222;
}
.grid-wrap {
  margin: 3px 0 0 17px;
  width: 564px;
  height: 464px;
  border: 1px solid #a0a0a0;
  border-top-width: 2px;
  background: #fff;
  display: flex;
  flex: none;
}
.grid {
  width: 546px;
  table-layout: fixed;
  border-collapse: collapse;
  flex: none;
  align-self: flex-start;
  font-size: 11.3px;
}
.c-icon {
  width: 17px;
}
.c-res {
  width: 65px;
}
.grid th {
  height: 20px;
  padding: 0;
  font-weight: 400;
  text-align: left;
  border-bottom: 1px solid #a0a0a0;
  color: #111;
}
.grid .corner {
  background: #b9d6ee;
}
.h-name {
  padding-left: 7px !important;
}
.h-res {
  padding-left: 7px !important;
  border-left: 1px solid #d0d0d0;
}
.grid td {
  height: 22px;
  padding: 0 0 0 3px;
  border-bottom: 1px solid #a0a0a0;
  white-space: nowrap;
  color: #1a1a1a;
}
.grid tr:last-child td {
  border-bottom: 0;
}
.grid td:first-child {
  padding: 0;
}
.grid td:last-child {
  padding-left: 4px;
  border-left: 1px solid #a0a0a0;
}
.grid td svg {
  width: 17px;
  height: 17px;
}
.grid a {
  color: #0000ee;
  text-decoration: underline;
}
.vscroll {
  flex: 1;
  background: #f0f0f0;
  display: flex;
  flex-direction: column;
  align-items: center;
  padding: 0 1px;
}
.vscroll svg {
  width: 10px;
  height: 8px;
  margin: 5px 0;
}
.vthumb {
  flex: 1;
  width: 100%;
  margin: 16px 0 0 0;
  background: #cdcdcd;
}
.vscroll svg:last-child {
  margin-top: 7px;
}
.dlg-foot {
  margin-top: 16px;
  border-top: 1px solid #fff;
  padding: 18px 14px 0 0;
  display: flex;
  justify-content: flex-end;
  gap: 9px;
}
.btn {
  width: 85px;
  height: 25px;
  font: inherit;
  padding: 0;
  border: 1px solid #bdbdbd;
  background: #ccc;
  color: #8f8f8f;
}
.main-btn {
  background: #e1e1e1;
  border: 2px solid #0078d7;
  color: #111;
}

/* watermark */
.activate {
  position: absolute;
  left: 1589px;
  top: 842px;
  color: #76839a;
  font-family: "Open Sans", sans-serif;
}
.act-big {
  font-size: 19px;
  line-height: 26px;
}
.act-small {
  font-size: 14.5px;
  line-height: 20px;
}

/* status + taskbar */
.statusbar {
  height: 23px;
  flex: none;
  background: #68217a;
  color: #fff;
  display: flex;
  align-items: center;
  font-size: 11.5px;
}
.statusbar svg {
  width: 10px;
  height: 10px;
  margin-right: 8px;
}
.taskbar {
  height: 40px;
  flex: none;
  background: linear-gradient(90deg, #cfe5ef, #cfe3ec 50%, #d4dbe8);
  display: flex;
  align-items: stretch;
}
.start {
  width: 16px;
  height: 16px;
  margin: 13px 17px 0 6px;
}
.search {
  width: 343px;
  background: #fff;
  border: 1px solid #c6cdd2;
  border-bottom: 0;
  margin-top: 1px;
  display: flex;
  align-items: center;
  font-size: 13.8px;
  color: #3a4450;
  padding: 0 0 2px 10px;
}
.search svg {
  width: 18px;
  height: 18px;
  margin-right: 10px;
}
.apps {
  display: flex;
}
.app {
  width: 49.2px;
  height: 100%;
  display: flex;
  align-items: center;
  justify-content: center;
  padding-bottom: 2px;
  position: relative;
}
.app svg {
  width: 24px;
  height: 24px;
}
.app.on::after {
  content: "";
  position: absolute;
  left: 4px;
  right: 5px;
  bottom: 0;
  height: 2px;
  background: #0078d7;
}
.app.stacked::after {
  background: linear-gradient(90deg, #0078d7 80%, #72b4ea 80%);
}
.app.current {
  width: 46px;
  margin-left: 11px;
  background: #e6f0f4;
  border-right: 1px solid #c3d3de;
}
.app.current::after {
  left: 0;
  right: 0;
}
.three {
  font: bold 19px "Liberation Sans", sans-serif;
  fill: #fff;
  text-anchor: middle;
}
.tray {
  margin-left: auto;
  display: flex;
  align-items: center;
  color: #222;
  font-size: 13px;
  padding-top: 2px;
}
.weather {
  width: 21px;
  height: 19px;
  margin-right: 9px;
}
.temp {
  margin-right: 10px;
}
.cond {
  margin-right: 19px;
}
.t-chev {
  width: 12px;
  height: 8px;
  margin-right: 19px;
}
.t-cloud {
  width: 16px;
  height: 12px;
  margin-right: 18px;
}
.t-wifi {
  width: 14px;
  height: 14px;
  margin-right: 15px;
}
.t-vol {
  width: 16px;
  height: 14px;
  margin-right: 16px;
}
.t-kbd {
  width: 22px;
  height: 12px;
  margin-right: 21px;
}
.t-pad {
  width: 15px;
  height: 12px;
  margin-right: 19px;
}
.lang {
  font-size: 11.5px;
  margin-right: 11.5px;
}
.clock {
  width: 62px;
  display: flex;
  flex-direction: column;
  align-items: center;
  font-size: 11px;
  line-height: 18px;
  margin-bottom: 2px;
}
.notif {
  width: 24px;
  height: 28px;
  margin: 0 16px 0 12px;
  position: relative;
}
.notif svg {
  width: 16px;
  height: 16px;
  position: absolute;
  left: 4px;
  top: 3px;
}
.badge {
  position: absolute;
  left: 10px;
  top: 10px;
  width: 15px;
  height: 15px;
  border: 1px solid #555;
  border-radius: 50%;
  background: #d0d8e4;
  font-size: 10px;
  line-height: 13px;
  text-align: center;
}
.peek {
  width: 1px;
  height: 40px;
  background: #b8bfcc;
  margin-right: 4px;
}
```
